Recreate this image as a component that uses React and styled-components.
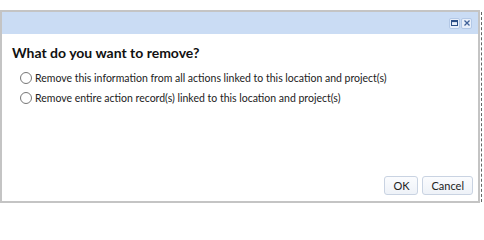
import React from 'react';
import styled, { createGlobalStyle } from 'styled-components';

const Global = createGlobalStyle`
  html, body {
    margin: 0;
    padding: 0;
    background: #fff;
  }
  body {
    font-family: Lato, "Noto Sans", sans-serif;
  }
`;

const Page = styled.div`
  width: 484px;
  height: 204px;
  padding-top: 10px;
  box-sizing: border-box;
  display: flex;
  align-items: stretch;
  gap: 1px;
`;

const Dialog = styled.div`
  width: 480px;
  height: 193px;
  box-sizing: border-box;
  border: 2px solid #c4c4c4;
  background: #fff;
  display: flex;
  flex-direction: column;
`;

const Rail = styled.div`
  width: 0;
  border-left: 1px dashed #666;
  margin: 2px 0;
`;

const TitleBar = styled.div`
  height: 22px;
  background: #cadcf4;
  display: flex;
  align-items: center;
  justify-content: flex-end;
  gap: 1px;
  padding-right: 6px;
`;

const TitleButton = styled.button`
  width: 11px;
  height: 11px;
  padding: 0;
  margin: 0;
  border: 1px solid #b3c8e6;
  border-radius: 2px;
  background: #e8effa;
  display: flex;
  align-items: center;
  justify-content: center;
  box-sizing: border-box;
  cursor: pointer;
  svg {
    display: block;
  }
`;

const Body = styled.div`
  flex: 1;
  padding: 10px 10px 0 10px;
  display: flex;
  flex-direction: column;
`;

const Heading = styled.h2`
  margin: 0 0 8px 0;
  font-family: Lato, "Noto Sans", sans-serif;
  font-size: 14px;
  font-weight: 700;
  color: #111;
  line-height: 18px;
`;

const Options = styled.div`
  display: flex;
  flex-direction: column;
  gap: 4px;
  padding-left: 8px;
`;

const Option = styled.label`
  display: flex;
  align-items: center;
  gap: 3px;
  font-size: 10.5px;
  color: #222;
  line-height: 16px;
  cursor: pointer;
`;

const Radio = styled.span`
  width: 10px;
  height: 10px;
  border: 1px solid #777;
  border-radius: 50%;
  background: #fff;
  flex: none;
`;

const Footer = styled.div`
  display: flex;
  justify-content: flex-end;
  gap: 4px;
  padding: 0 5px 6px 0;
`;

const Button = styled.button`
  height: 19px;
  padding: 0 8px;
  border: 1px solid #c9d3e2;
  border-radius: 3px;
  background: linear-gradient(#fbfcfe, #eef2f8);
  font-family: Lato, "Noto Sans", sans-serif;
  font-size: 11px;
  color: #222;
  cursor: pointer;
`;

const MaxIcon = () => (
  <svg width="7" height="6" viewBox="0 0 7 6">
    <rect x="0.5" y="0.5" width="6" height="5" fill="none" stroke="#2c4f86" strokeWidth="1" />
    <rect x="0.5" y="0.5" width="6" height="1.6" fill="#2c4f86" />
  </svg>
);

const CloseIcon = () => (
  <svg width="6" height="6" viewBox="0 0 6 6">
    <path d="M0.5 0.5 L5.5 5.5 M5.5 0.5 L0.5 5.5" stroke="#3f6098" strokeWidth="1.3" />
  </svg>
);

export default function App() {
  return (
    <>
      <Global />
      <Page>
        <Dialog>
          <TitleBar>
            <TitleButton aria-label="Maximize"><MaxIcon /></TitleButton>
            <TitleButton aria-label="Close"><CloseIcon /></TitleButton>
          </TitleBar>
          <Body>
            <Heading>What do you want to remove?</Heading>
            <Options>
              <Option>
                <Radio />
                Remove this information from all actions linked to this location and project(s)
              </Option>
              <Option>
                <Radio />
                Remove entire action record(s) linked to this location and project(s)
              </Option>
            </Options>
          </Body>
          <Footer>
            <Button>OK</Button>
            <Button>Cancel</Button>
          </Footer>
        </Dialog>
        <Rail />
      </Page>
    </>
  );
}
